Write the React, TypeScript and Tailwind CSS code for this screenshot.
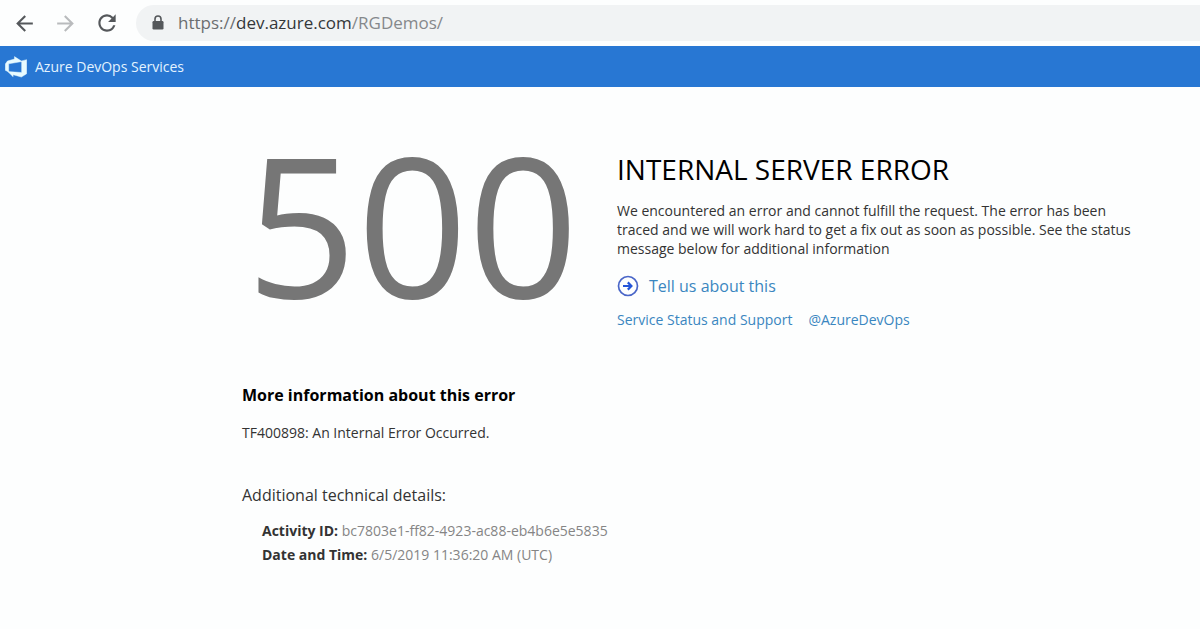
import type { ReactNode } from "react";
import { MdArrowBack, MdArrowForward, MdRefresh } from "react-icons/md";

const DETAILS = [
  { label: "Activity ID:", value: "bc7803e1-ff82-4923-ac88-eb4b6e5e5835" },
  { label: "Date and Time:", value: "6/5/2019 11:36:20 AM (UTC)" },
];

function NavButton({ label, className, children }: {
  label: string;
  className: string;
  children: ReactNode;
}) {
  return (
    <button type="button" aria-label={label} className={className}>
      {children}
    </button>
  );
}

function LockIcon() {
  return (
    <svg width="16" height="16" viewBox="0 0 16 16" fill="none" aria-hidden="true">
      <path d="M5 7 V4 A3 3 0 0 1 11 4 V7" stroke="#55585b" strokeWidth="1.6" />
      <rect x="2.5" y="6" width="11" height="8.5" rx="1.2" fill="#55585b" />
    </svg>
  );
}

function BrowserBar() {
  return (
    <div className="flex items-center h-[46px] pl-3">
      <div className="flex items-center gap-4">
        <NavButton label="Back" className="text-[#55585b]">
          <MdArrowBack size={25} />
        </NavButton>
        <NavButton label="Forward" className="text-[#b9bbbd]">
          <MdArrowForward size={25} />
        </NavButton>
        <NavButton label="Reload" className="text-[#55585b]">
          <MdRefresh size={26} />
        </NavButton>
      </div>
      <div className="flex flex-1 items-center gap-3 h-9 ml-4 pl-3.5 rounded-l-full bg-[#f1f3f4]">
        <LockIcon />
        <div
          role="textbox"
          aria-label="Address"
          contentEditable
          suppressContentEditableWarning
          className="text-[17px] leading-6 text-[#85888b] outline-none"
        >
          <span className="text-[#6b6e70]">https://</span>
          <span className="text-[#34373a]">dev.azure.com</span>
          <span>/RGDemos/</span>
        </div>
      </div>
    </div>
  );
}

function DevOpsLogo() {
  return (
    <svg width="22" height="22" viewBox="0.8 0.8 14.4 14.4" fill="#e8fbff" stroke="#e8fbff" strokeWidth="0.3" aria-hidden="true">
      <path d="M15 3.2 V12.4 L11.5 14.6 L6.1 13 V14.4 L2.6 11 L11.7 11.6 V4 Z" />
      <path d="M12 4.4 L7 1.2 V2.8 L2.4 4.1 L1 6.1 V10.2 L3.2 11.2 V5.9 Z" />
    </svg>
  );
}

function CircleArrow() {
  return (
    <svg width="22" height="22" viewBox="0 0 22 22" fill="none" aria-hidden="true">
      <circle cx="11" cy="11" r="9.5" stroke="#4a66c8" strokeWidth="1.7" />
      <path d="M6 11 H14 M10.8 7.4 L14.4 11 L10.8 14.6" stroke="#2354d8" strokeWidth="2.2" />
    </svg>
  );
}

export default function App() {
  return (
    <div className="min-h-screen bg-[#fdfefe] font-['Open_Sans','Noto_Sans',sans-serif] text-[#333]">
      <BrowserBar />

      <header className="flex items-center h-[41px] pl-[5px] bg-[#2877d3]">
        <a href="#" className="flex items-center gap-2 text-sm text-[#e3f3ff]">
          <DevOpsLogo />
          Azure DevOps Services
        </a>
      </header>

      <main className="pl-[242px] pr-13">
        <section className="flex pt-14">
          <div className="w-[375px] shrink-0 pl-1 text-[194px] leading-[160px] text-[#767676]">
            500
          </div>
          <div className="pt-2">
            <h1 className="text-[28px] leading-9 text-black">INTERNAL SERVER ERROR</h1>
            <p className="mt-3.5 text-sm leading-[19px]">
              We encountered an error and cannot fulfill the request. The error has been
              traced and we will work hard to get a fix out as soon as possible. See the status
              message below for additional information
            </p>
            <a href="#" className="flex items-center gap-2.5 mt-4 text-base leading-6 text-[#3a86c0]">
              <CircleArrow />
              Tell us about this
            </a>
            <div className="flex gap-4 mt-3 text-sm leading-5 text-[#3a86c0]">
              <a href="#">Service Status and Support</a>
              <a href="#">@AzureDevOps</a>
            </div>
          </div>
        </section>

        <section className="pt-[53px]">
          <h2 className="text-base leading-6 font-bold text-black">More information about this error</h2>
          <p className="mt-4 text-sm leading-5">TF400898: An Internal Error Occurred.</p>
          <h3 className="mt-10 text-base leading-6">Additional technical details:</h3>
          <ul className="mt-3 pl-5 text-sm leading-6">
            {DETAILS.map((d) => (
              <li key={d.label}>
                <strong>{d.label}</strong> <span className="text-[#858585]">{d.value}</span>
              </li>
            ))}
          </ul>
        </section>
      </main>
    </div>
  );
}
